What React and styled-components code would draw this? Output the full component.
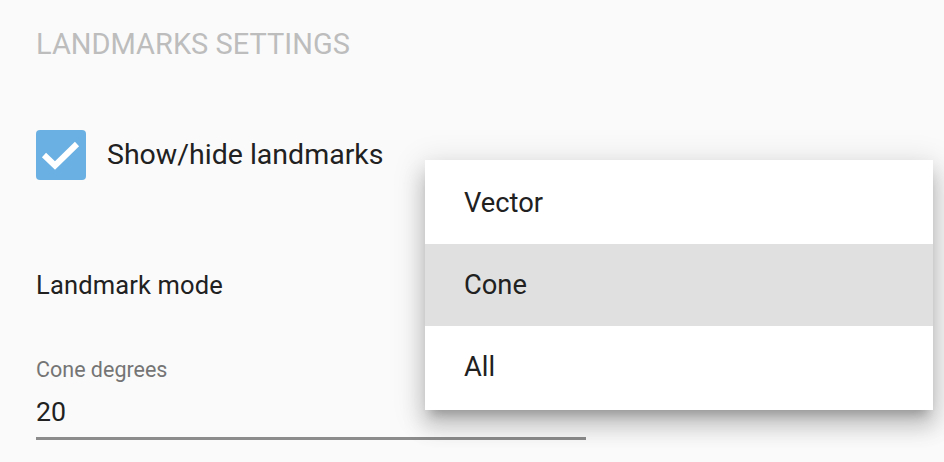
import React from "react";
import styled, { createGlobalStyle } from "styled-components";

const Global = createGlobalStyle`
  html, body { margin: 0; padding: 0; background: #fafafa; }
  body { font-family: Roboto, "Noto Sans", sans-serif; overflow: hidden; }
`;

const Page = styled.div`
  position: relative;
  width: 944px;
  height: 462px;
  background: #fafafa;
  padding: 0 36px;
  box-sizing: border-box;
  overflow: hidden;
`;

const Heading = styled.h2`
  margin: 0;
  padding-top: 27px;
  font-weight: 400;
  font-size: 29px;
  line-height: 34px;
  color: #bdbdbd;
`;

const CheckRow = styled.label`
  display: flex;
  align-items: center;
  gap: 21px;
  height: 50px;
  margin-top: 69px;
  font-size: 28.5px;
  line-height: 34px;
  color: #212121;
`;

const Box = styled.span`
  width: 50px;
  height: 50px;
  border-radius: 4px;
  background: #6ab0e2;
  display: flex;
  flex: none;
`;

const FieldLabel = styled.div`
  margin-top: 90px;
  font-size: 25.5px;
  line-height: 30px;
  letter-spacing: 0.15px;
  color: #212121;
`;

const TextField = styled.div`
  margin-top: 57px;
  width: 550px;
`;

const SmallLabel = styled.div`
  font-size: 21.5px;
  line-height: 26px;
  color: #757575;
`;

const Value = styled.div`
  font-size: 26.7px;
  line-height: 32px;
  margin-top: 13px;
  padding-bottom: 9px;
  color: #212121;
  border-bottom: 3px solid #8c8c8c;
`;

const Menu = styled.ul`
  position: absolute;
  left: 425px;
  top: 160px;
  width: 508px;
  margin: 0;
  padding: 2px 0;
  list-style: none;
  background: #fff;
  box-shadow: 0 10px 10px -6px rgba(0,0,0,0.22), 0 16px 20px 2px rgba(0,0,0,0.15), 0 6px 28px 4px rgba(0,0,0,0.13);
`;

const Item = styled.li`
  height: 82px;
  display: flex;
  align-items: center;
  padding-left: 39px;
  font-size: 27.3px;
  color: #212121;
  background: ${(p) => (p.$active ? "#e0e0e0" : "#fff")};
`;

export default function App() {
  return (
    <>
      <Global />
      <Page>
        <Heading>LANDMARKS SETTINGS</Heading>
        <CheckRow>
          <Box>
            <svg width="50" height="50" viewBox="0 0 50 50">
              <path d="M8 25 L19 35.5 L41 14" fill="none" stroke="#fff" strokeWidth="6" />
            </svg>
          </Box>
          Show/hide landmarks
        </CheckRow>
        <FieldLabel>Landmark mode</FieldLabel>
        <TextField>
          <SmallLabel>Cone degrees</SmallLabel>
          <Value>20</Value>
        </TextField>
        <Menu>
          <Item>Vector</Item>
          <Item $active>Cone</Item>
          <Item>All</Item>
        </Menu>
      </Page>
    </>
  );
}
